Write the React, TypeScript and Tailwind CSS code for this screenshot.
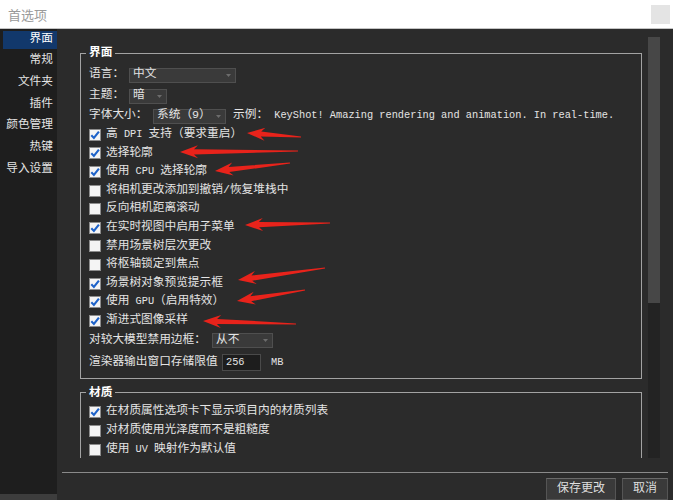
import React from "react";

type Arrow = [number, number, number, number];

// tip x, tip y, tail x, tail y
const arrows: Arrow[] = [
  [247, 133, 301, 137],
  [180, 152, 298, 151],
  [215, 171, 290, 163],
  [245, 225, 330, 223],
  [238, 280, 325, 268],
  [237, 301, 305, 290],
  [203, 321, 296, 324],
];

function arrowPoints([tx, ty, ex, ey]: Arrow) {
  const len = Math.hypot(ex - tx, ey - ty);
  const dx = (ex - tx) / len;
  const dy = (ey - ty) / len;
  const nx = -dy;
  const ny = dx;
  const p = (a: number, b: number) => `${(tx + dx * a + nx * b).toFixed(1)},${(ty + dy * a + ny * b).toFixed(1)}`;
  const q = (b: number) => `${(ex + nx * b).toFixed(1)},${(ey + ny * b).toFixed(1)}`;
  return [p(0, 0), p(18, 6.5), p(14, 2.6), q(0.6), q(-0.6), p(14, -2.6), p(18, -6.5)].join(" ");
}

const L = ({ children }: { children: React.ReactNode }) => <span className="text-[10.3px]">{children}</span>;

function Check({ on }: { on?: boolean }) {
  return (
    <span className="w-[12px] h-[12px] bg-[#f4f4f4] border border-[#8c8c8c] flex items-center justify-center shrink-0">
      {on && (
        <svg width="10" height="10" viewBox="0 0 10 10">
          <path d="M1.3 5.3 L3.9 8 L8.9 1.6" stroke="#1d62c9" strokeWidth="2.1" fill="none" />
        </svg>
      )}
    </span>
  );
}

function Combo({ className, children }: { className: string; children: React.ReactNode }) {
  return (
    <div className={`h-[15px] shrink-0 bg-[#3a3a3a] border border-[#4f4f4f] flex items-center justify-between pl-[3px] pr-[4px] ${className}`}>
      <span className="whitespace-nowrap">{children}</span>
      <svg width="5" height="3" viewBox="0 0 5 3">
        <path d="M0 0 H5 L2.5 3 Z" fill="#6c6c6c" />
      </svg>
    </div>
  );
}

function CheckRow({ on, h, children }: { on?: boolean; h: string; children: React.ReactNode }) {
  return (
    <div className={`flex items-center gap-[5px] ${h}`}>
      <Check on={on} />
      <span className="whitespace-nowrap">{children}</span>
    </div>
  );
}

const sideItems = ["界面", "常规", "文件夹", "插件", "颜色管理", "热键", "导入设置"];

const uiChecks: { on: boolean; label: React.ReactNode }[] = [
  { on: true, label: <>高<L> DPI </L>支持（要求重启）</> },
  { on: true, label: "选择轮廓" },
  { on: true, label: <>使用<L> CPU </L>选择轮廓</> },
  { on: false, label: "将相机更改添加到撤销/恢复堆栈中" },
  { on: false, label: "反向相机距离滚动" },
  { on: true, label: "在实时视图中启用子菜单" },
  { on: false, label: "禁用场景树层次更改" },
  { on: false, label: "将枢轴锁定到焦点" },
  { on: true, label: "场景树对象预览提示框" },
  { on: true, label: <>使用<L> GPU</L>（启用特效）</> },
  { on: true, label: "渐进式图像采样" },
];

export default function App() {
  return (
    <div className="relative w-[673px] h-[500px] overflow-hidden bg-[#2b2b2b] text-[11.7px] leading-none text-[#e4e4e4] font-['Liberation_Mono','Noto_Sans_CJK_SC',monospace]">
      <div className="h-[29px] bg-white border-b border-[#c4c4c4] flex items-center justify-between pl-[8px] pr-[3px]">
        <span className="text-[13px] text-[#9a9a9a] font-['Noto_Sans_CJK_SC',sans-serif]">首选项</span>
        <div className="w-[19px] h-[19px] bg-[#e4e4e4]" />
      </div>

      <div className="flex h-[471px]">
        <div className="w-[57px] bg-[#1e1e1e] flex flex-col">
          <div className="flex-1 flex flex-col gap-[3.7px] pt-[1.5px] pl-[3px]">
            {sideItems.map((s, i) => (
              <div
                key={s}
                className={`h-[18px] flex items-center justify-end pr-[4px] whitespace-nowrap ${i === 0 ? "bg-[#12386b] text-white" : ""}`}
              >
                {s}
              </div>
            ))}
          </div>
          <div className="h-[6px] bg-[#3d3d3d]" />
        </div>

        <div className="flex-1 flex flex-col">
          <div className="mt-[8px] ml-[5px] mr-[13px] h-[421px] flex">
            <div className="flex-1 overflow-hidden pl-[18px] pr-[6px] pt-[9px]">
              <fieldset className="border border-[#a3a3a3] pl-[8px] pr-[8px] pb-[4px]">
                <legend className="-ml-[3px] px-[3px] leading-[14px] font-bold text-white">界面</legend>
                <div className="pt-[4.5px]">
                  <div className="h-[21px] flex items-center gap-[5px]">
                    <span className="whitespace-nowrap shrink-0">语言：</span>
                    <Combo className="w-[107px]">中文</Combo>
                  </div>
                  <div className="h-[21px] flex items-center gap-[5px]">
                    <span className="whitespace-nowrap shrink-0">主题：</span>
                    <Combo className="w-[38px]">暗</Combo>
                  </div>
                  <div className="h-[19px] flex items-center">
                    <span className="w-[64px] whitespace-nowrap shrink-0">字体大小：</span>
                    <Combo className="w-[73px]">系统（9）</Combo>
                    <span className="ml-[7px] whitespace-nowrap">
                      示例：<L> KeyShot! Amazing rendering and animation. In real-time.</L>
                    </span>
                  </div>
                  {uiChecks.map((c, i) => (
                    <CheckRow key={i} on={c.on} h="h-[18.6px]">
                      {c.label}
                    </CheckRow>
                  ))}
                  <div className="h-[21.5px] flex items-center">
                    <span className="w-[123px] whitespace-nowrap shrink-0">对较大模型禁用边框：</span>
                    <Combo className="w-[61px]">从不</Combo>
                  </div>
                  <div className="h-[22px] flex items-center">
                    <span className="w-[133px] whitespace-nowrap shrink-0">渲染器输出窗口存储限值</span>
                    <div className="w-[39px] h-[17px] bg-[#1d1d1d] border border-[#4a4a4a] flex items-center pl-[3px]">
                      <L>256</L>
                    </div>
                    <span className="ml-[10px]">
                      <L>MB</L>
                    </span>
                  </div>
                </div>
              </fieldset>

              <fieldset className="mt-[7px] border border-[#a3a3a3] pl-[8px] pr-[8px] pb-[30px]">
                <legend className="-ml-[3px] px-[3px] leading-[14px] font-bold text-white">材质</legend>
                <div className="pt-[2.5px]">
                  <CheckRow on h="h-[19px]">在材质属性选项卡下显示项目内的材质列表</CheckRow>
                  <CheckRow h="h-[19px]">对材质使用光泽度而不是粗糙度</CheckRow>
                  <CheckRow h="h-[19px]">
                    使用<L> UV </L>映射作为默认值
                  </CheckRow>
                </div>
              </fieldset>
            </div>
            <div className="w-[12px] bg-[#232323]">
              <div className="h-[266px] bg-[#474747]" />
            </div>
          </div>

          <div className="mt-[14px] mx-[5px] h-[2px] bg-[#8a8a8a]" />

          <div className="flex justify-end gap-[6px] pr-[5px] pt-[5px]">
            <button className="w-[70px] h-[22px] bg-[#3a3a3a] border border-[#555] border-t-[#6a6a6a] text-[12px] text-[#dedede]">
              保存更改
            </button>
            <button className="w-[46px] h-[22px] bg-[#3a3a3a] border border-[#555] border-t-[#6a6a6a] text-[12px] text-[#dedede]">
              取消
            </button>
          </div>
        </div>
      </div>

      <svg className="absolute inset-0 pointer-events-none" width="673" height="500" viewBox="0 0 673 500">
        {arrows.map((a, i) => (
          <polygon key={i} points={arrowPoints(a)} fill="#e8231b" />
        ))}
      </svg>
    </div>
  );
}
